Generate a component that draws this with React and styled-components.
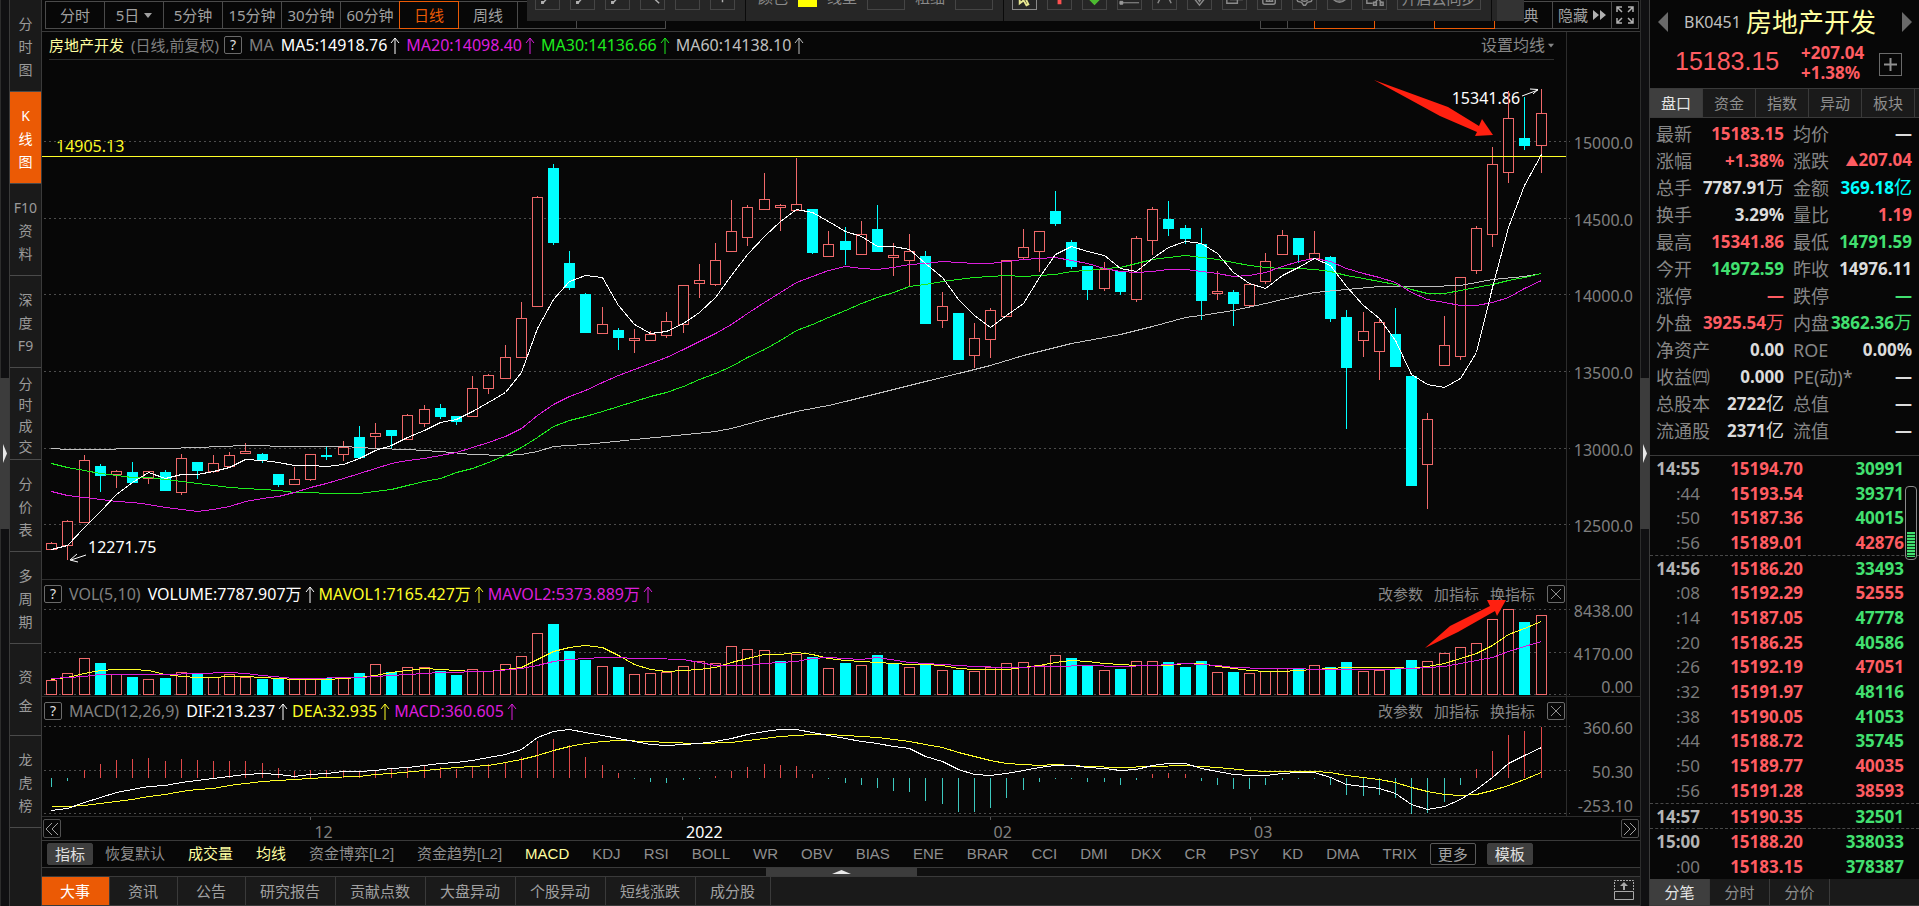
import React from "react";
import styled, { createGlobalStyle } from "styled-components";

const C = {
  bg: "#070707",
  panel: "#1a1a1a",
  line: "#3a3a3a",
  dim: "#808080",
  mid: "#a0a0a0",
  red: "#ff5c62",
  green: "#42e070",
  cyan: "#00ffff",
  candle: "#f0696a",
  pale: "#ffffa0",
  yellow: "#ffff28",
  magenta: "#dc1edc",
  lime: "#1eec1e",
  white: "#ffffff",
  silver: "#c0c0c0",
  orange: "#eb5a05",
};

const GlobalStyle = createGlobalStyle`
  * { box-sizing: border-box; }
  body { margin: 0; background: ${C.bg}; color: ${C.mid};
    font: 15px/20px "Noto Sans", "Noto Sans CJK SC", sans-serif; }
  button, select { font: inherit; color: inherit; margin: 0; padding: 0;
    border: 0; background: none; white-space: nowrap; }
`;

/* ---------- frame ---------- */
const Frame = styled.div`
  display: flex;
  height: 100vh;
  min-height: 800px;
  min-width: 1400px;
  overflow: hidden;
`;
const Gutter = styled.div`
  flex: none;
  width: 9px;
  display: flex;
  align-items: center;
  background: #101012;
  box-shadow: inset 1px 0 0 #2c2c2c;
`;
const Grip = styled.button`
  display: flex;
  align-items: center;
  justify-content: center;
  width: ${(p) => (p.$flat ? "151px" : "9px")};
  height: ${(p) => (p.$flat ? "8px" : "151px")};
  background: #3c3c3c;
`;
const Main = styled.main`
  flex: 1;
  min-width: 0;
  display: flex;
  flex-direction: column;
`;

/* ---------- left navigation ---------- */
const SideNav = styled.nav`
  flex: none;
  width: 33px;
  background: ${C.panel};
  border-left: 1px solid ${C.line};
  border-right: 1px solid ${C.line};
`;
const SideButton = styled.button`
  display: flex;
  flex-direction: column;
  align-items: center;
  justify-content: center;
  width: 100%;
  height: 92px;
  padding-top: 2px;
  border-bottom: 1px solid #4a4a4a;
  font-size: 14px;
  line-height: ${(p) => p.$pitch || 23}px;
  color: ${(p) => (p.$active ? "#fff" : "#9a9a9a")};
  background: ${(p) => (p.$active ? C.orange : "transparent")};
`;

/* ---------- period toolbar ---------- */
const Toolbar = styled.div`
  position: relative;
  display: flex;
  align-items: flex-start;
  height: 32px;
  padding: 1px 2px 0 3px;
  border-bottom: 1px solid ${C.line};
`;
const Period = styled.button`
  display: flex;
  align-items: center;
  justify-content: center;
  gap: 5px;
  flex: none;
  width: ${(p) => p.$w || 60}px;
  height: 28px;
  margin-right: -1px;
  padding-left: ${(p) => (p.$shift ? 15 : 0)}px;
  border: 1px solid ${(p) => (p.$active ? C.orange : "#4a4a4a")};
  z-index: ${(p) => (p.$active ? 1 : 0)};
  color: ${(p) => (p.$active ? C.orange : C.mid)};
`;
const Spacer = styled.div`
  flex: 1;
`;

/* ---------- drawing tools floating over the toolbar ---------- */
const DrawBar = styled.div`
  position: absolute;
  z-index: 3;
  top: -15px;
  left: 485px;
  right: 116px;
  height: 36px;
  display: flex;
  overflow: hidden;
  background: #262626;
`;
const DrawGroup = styled.div`
  display: flex;
  align-items: flex-start;
  gap: 10px;
  padding: 0 10px 0 ${(p) => (p.$wide ? 12 : 8)}px;
  border-right: 1px solid #0a0a0a;
`;
const DrawButton = styled.button`
  flex: none;
  width: ${(p) => p.$w || 25}px;
  height: 25px;
  border: 1px solid ${(p) => (p.$active ? "#8a8a8a" : "#454545")};
  line-height: 24px;
  color: #8a8a8a;
  svg { display: block; }
`;
const DrawField = styled.label`
  display: flex;
  align-items: flex-start;
  gap: 10px;
  line-height: 24px;
  color: #8a8a8a;
  white-space: nowrap;
`;
const DrawSelect = styled.select`
  appearance: none;
  width: 38px;
  height: 25px;
  border: 1px solid #454545;
`;
const Swatch = styled.input`
  appearance: none;
  width: 19px;
  height: 19px;
  margin: 3px 0;
  padding: 0;
  border: 0;
  background: #ffff00;
  &::-webkit-color-swatch-wrapper { padding: 0; }
  &::-webkit-color-swatch { border: 0; }
`;
const DrawEnd = styled.div`
  width: 27px;
  margin-left: auto;
  background: #333;
`;

/* ---------- chart panes ---------- */
const Pane = styled.section`
  display: grid;
  grid-template-columns: 1fr 74px;
  grid-template-rows: ${(p) => (p.$h ? `${p.$head}px ${p.$h}px` : `${p.$head}px minmax(200px, 1fr)`)};
  flex: ${(p) => (p.$h ? "none" : 1)};
  min-height: 0;
  border-bottom: 1px solid #2c2c2c;
`;
const PaneHead = styled.header`
  display: flex;
  align-items: center;
  margin: ${(p) => (p.$ruled ? "0 12px 0 7px" : "0 1px 0 2px")};
  padding-bottom: 1px;
  border-bottom: ${(p) => (p.$ruled ? "1px solid #303030" : "0")};
  font-size: 16px;
  color: ${C.dim};
  white-space: nowrap;
`;
const AxisTop = styled.div`
  border-left: 1px solid #2c2c2c;
`;
const Axis = styled.div`
  position: relative;
  border-left: 1px solid #2c2c2c;
  font-size: 16px;
  color: ${C.dim};
`;
const AxisLabel = styled.span`
  position: absolute;
  right: 7px;
  top: ${(p) => p.$top}%;
  transform: translateY(-50%);
`;
const Plot = styled.div`
  position: relative;
  min-width: 0;
`;
const PlotSvg = styled.svg`
  position: absolute;
  z-index: 1;
  inset: 0;
  width: 100%;
  height: 100%;
  overflow: visible;
  pointer-events: none;
  polyline, line, rect { shape-rendering: crispEdges; vector-effect: non-scaling-stroke; }
`;
const PlotNote = styled.span`
  position: absolute;
  left: ${(p) => p.$left}%;
  top: ${(p) => p.$top}%;
  transform: translateY(-50%);
  font-size: 16px;
  color: ${(p) => p.$color || C.white};
`;
const Title = styled.span`
  margin-right: 7px;
  font-size: 15px;
  color: ${C.pale};
`;
const Adjust = styled.span`
  margin-right: 5px;
  font-size: 15px;
`;
const Help = styled.button`
  width: 18px;
  height: 18px;
  margin-right: 7px;
  border: 1px solid #6a6a6a;
  border-radius: 2px;
  font-size: 14px;
  line-height: 16px;
  color: #e0e0e0;
`;
const Name = styled.span`
  margin-right: 7px;
`;
const Reading = styled.span`
  display: flex;
  align-items: center;
  gap: 3px;
  margin-right: ${(p) => p.$gap || 6}px;
  color: ${(p) => p.$color};
`;
const HeadAction = styled.button`
  display: flex;
  align-items: center;
  gap: 3px;
  margin-right: ${(p) => p.$gap || 0}px;
  font-size: ${(p) => p.$size || 15}px;
  color: #868686;
`;
const CloseBox = styled.button`
  display: flex;
  width: 18px;
  height: 18px;
  align-items: center;
  justify-content: center;
  border: 1px solid #6a6a6a;
  border-radius: 2px;
`;

/* ---------- date row ---------- */
const DateRow = styled.div`
  position: relative;
  flex: none;
  display: flex;
  justify-content: space-between;
  height: 24px;
  padding: 2px 1px 0 1px;
  border-bottom: 1px solid ${C.line};
`;
const PageButton = styled.button`
  display: flex;
  align-items: center;
  justify-content: center;
  width: 18px;
  height: 19px;
  border: 1px solid #505050;
  border-radius: 2px;
`;
const DateMark = styled.span`
  position: absolute;
  bottom: -2px;
  left: ${(p) => p.$left}%;
  padding-left: 4px;
  font-size: 16px;
  color: ${(p) => (p.$strong ? C.white : C.dim)};
  &::before { content: ""; position: absolute; left: 0; bottom: 22px; height: 3px; border-left: 1px solid #555; }
`;

/* ---------- indicator row ---------- */
const IndicatorRow = styled.div`
  flex: none;
  display: flex;
  align-items: center;
  height: 27px;
  padding-left: 5px;
  border-bottom: 1px solid ${C.line};
`;
const Indicator = styled.button`
  margin-left: ${(p) => p.$lead || 23}px;
  font-family: "Liberation Sans", "Noto Sans CJK SC", sans-serif;
  color: ${(p) => (p.$on ? C.pale : "#8e8e8e")};
`;
const Pill = styled.button`
  flex: none;
  width: 46px;
  height: 22px;
  line-height: 20px;
  margin-left: ${(p) => p.$lead || 0}px;
  border: 1px solid ${(p) => (p.$outlined ? "#5a5a5a" : "#3e3e3e")};
  border-radius: 2px;
  background: ${(p) => (p.$outlined ? "transparent" : "#3e3e3e")};
  color: ${(p) => (p.$outlined ? C.mid : "#e0e0e0")};
`;
const FlatGutter = styled.div`
  flex: none;
  display: flex;
  justify-content: center;
  height: 8px;
  background: #101010;
`;
const BottomTabs = styled.nav`
  flex: none;
  display: flex;
  height: 30px;
  background: ${C.panel};
  border-top: 1px solid ${C.line};
  border-bottom: 1px solid ${C.line};
`;
const BottomTab = styled.button`
  min-width: 68px;
  padding: 0 15px 0 14px;
  border-right: 1px solid ${C.line};
  color: ${(p) => (p.$active ? "#fff" : C.mid)};
  background: ${(p) => (p.$active ? C.orange : "transparent")};
`;
const ExpandButton = styled.button`
  margin: 2px 6px 0 auto;
`;

/* ---------- quote panel ---------- */
const Quote = styled.aside`
  flex: none;
  width: 270px;
  display: flex;
  flex-direction: column;
  border-left: 1px solid ${C.line};
`;
const QuoteTop = styled.header`
  flex: none;
  height: 88px;
  padding: 3px 7px 0 8px;
`;
const QuoteName = styled.div`
  display: flex;
  align-items: center;
  height: 38px;
`;
const Code = styled.span`
  margin-left: 16px;
  font-size: 16px;
  color: ${C.silver};
`;
const StockName = styled.span`
  flex: 1;
  margin-left: 5px;
  font-size: 26px;
  line-height: 38px;
  color: ${C.pale};
`;
const QuotePrice = styled.div`
  display: flex;
  align-items: center;
  height: 44px;
  padding: 0 10px 0 17px;
  color: ${C.red};
`;
const Last = styled.strong`
  flex: none;
  width: 126px;
  padding-bottom: 5px;
  font: 25px/30px "Liberation Sans", sans-serif;
`;
const Change = styled.strong`
  flex: 1;
  font-size: 17px;
  line-height: 20px;
`;
const AddButton = styled.button`
  display: flex;
  margin-top: 2px;
  width: 23px;
  height: 23px;
  border: 1px solid #6a6a6a;
`;
const QuoteTabs = styled.nav`
  flex: none;
  display: flex;
  height: ${(p) => p.$h || 30}px;
  background: ${C.panel};
  border-top: ${(p) => (p.$h ? 0 : 1)}px solid ${C.line};
  border-bottom: 1px solid ${C.line};
`;
const QuoteTab = styled.button`
  flex: none;
  width: ${(p) => p.$w || 53}px;
  border-right: 1px solid ${C.line};
  color: ${(p) => (p.$active ? "#e6e6e6" : "#8e8e8e")};
  background: ${(p) => (p.$active ? "#3e3e3e" : "transparent")};
`;
const InfoWrap = styled.div`
  flex: none;
  padding: 2px 7px 11px 6px;
  border-bottom: 1px solid ${C.line};
`;
const InfoTable = styled.table`
  width: 100%;
  table-layout: fixed;
  border-collapse: collapse;
  th, td { height: 27px; padding: 0; line-height: 26px; white-space: nowrap; }
`;
const InfoLabel = styled.th`
  text-align: left;
  font-weight: 400;
  font-size: 18px;
  color: #868686;
`;
const InfoValue = styled.td`
  text-align: right;
  font-size: 17px;
  font-weight: 700;
  color: ${(p) => p.$color};
  span { float: right; }
  i { font-style: normal; font-weight: 400; font-size: 18px; }
`;
const TickWrap = styled.div`
  position: relative;
  flex: 1;
  min-height: 0;
`;
const TickTable = styled.table`
  width: 100%;
  height: 100%;
  table-layout: fixed;
  border-collapse: collapse;
  td { padding: 1px 0 0; line-height: 20px; font-size: 17px; font-weight: 700; }
`;
const TickRow = styled.tr`
  border-bottom: ${(p) => (p.$rule ? `1px dashed #484848` : "0")};
`;
const TickTime = styled.td`
  width: 50px;
  text-align: right;
  && { font-weight: ${(p) => (p.$major ? 700 : 400)}; }
  color: ${(p) => (p.$major ? "#b4b4b4" : "#7a7a7a")};
`;
const TickPrice = styled.td`
  width: 103px;
  text-align: right;
  color: ${C.red};
`;
const TickVolume = styled.td`
  text-align: right;
  && { padding-right: 15px; }
  color: ${(p) => (p.$up ? C.red : C.green)};
`;
const Meter = styled.div`
  position: absolute;
  right: 2px;
  top: 30px;
  width: 12px;
  height: 74px;
  padding: 45px 1px 2px;
  border: 1px solid #8a8a8a;
  border-radius: 4px;
  &::after { content: ""; display: block; height: 25px;
    background: repeating-linear-gradient(${C.green} 0 2px, #0c3a18 2px 3px); }
`;

/* ---------- series ---------- */
// Each candle: [rising, high, body top, body bottom, low] on the price plot's own scale.
const CANDLES = [
  [1,542,543,549,549],[1,520,521,545,560],[1,455,460,522,522],[0,464,466,475,492],[1,470,471,474,488],[0,462,472,482,482],
  [1,471,471,478,484],[0,470,472,490,491],[1,454,458,492,495],[0,462,462,470,479],[1,455,463,471,473],[1,452,455,466,466],
  [1,443,451,453,453],[0,453,454,459,463],[0,474,474,484,487],[1,467,479,484,484],[1,454,454,479,481],[0,446,455,456,460],
  [1,441,447,454,461],[0,426,437,457,457],[1,423,433,436,448],[0,430,430,435,448],[1,414,415,439,440],[1,405,409,423,427],
  [0,404,408,416,419],[0,416,416,421,425],[1,376,388,416,416],[1,374,375,388,394],[1,345,357,378,379],[1,302,318,357,357],
  [1,196,197,306,306],[0,164,168,242,245],[0,251,263,287,290],[0,293,294,332,332],[1,307,324,333,333],[0,328,330,337,350],
  [1,329,338,340,353],[1,331,334,340,340],[1,312,321,335,338],[1,285,285,324,333],[1,264,280,283,298],[1,243,260,284,286],
  [1,200,231,251,251],[1,205,207,237,246],[1,173,199,209,209],[1,204,205,207,231],[1,158,204,210,210],[0,209,209,252,254],
  [1,231,244,256,256],[0,227,241,249,265],[1,221,234,254,254],[0,205,229,251,252],[1,243,255,257,276],[1,234,251,260,287],
  [0,251,256,323,324],[1,292,306,320,328],[0,313,313,359,359],[1,323,338,355,368],[1,308,310,339,358],[1,260,260,316,316],
  [1,229,247,257,260],[1,231,231,251,272],[0,191,211,223,226],[0,240,242,266,269],[0,266,266,289,300],[1,262,269,288,291],
  [0,271,271,291,295],[1,236,238,299,302],[1,207,209,240,255],[0,201,219,228,236],[0,225,228,238,244],[0,228,244,300,320],
  [1,271,291,293,300],[0,290,292,303,326],[1,284,284,305,305],[1,253,261,281,284],[1,230,235,254,254],[0,238,238,254,263],
  [1,231,253,258,258],[0,256,257,318,322],[0,310,317,367,429],[1,312,331,340,357],[1,318,322,351,380],[0,308,334,366,366],
  [0,376,376,485,485],[1,413,419,464,509],[1,316,345,365,365],[1,277,277,356,360],[1,226,228,270,274],[1,147,164,234,247],
  [1,91,118,172,183],[0,97,138,145,150],[1,89,113,145,173],
];
const MA5 = [549,545,527,511,494,482,472,478,474,474,471,467,459,460,462,465,465,466,464,458,450,445,437,430,422,419,411,402,392,372,
  328,299,281,275,277,305,324,333,331,323,312,297,275,254,236,221,209,212,221,231,236,246,246,249,263,277,299,315,327,315,303,277,
  254,246,251,255,268,271,258,247,241,243,253,272,283,288,275,267,258,265,286,305,318,340,374,384,387,378,352,287,227,185,154];
const MA20 = [491,495,497,499,501,502,504,507,509,511,509,506,501,498,496,492,487,483,478,473,468,463,460,458,455,452,447,442,436,428,
  415,404,396,390,382,375,369,363,357,349,341,333,324,313,302,292,282,276,270,266,268,269,267,264,263,261,262,263,263,261,259,258,
  257,260,263,268,271,272,271,269,269,271,273,276,275,272,266,261,258,261,268,273,277,282,292,299,302,305,305,302,297,288,280];
const MA30 = [463,467,470,473,475,477,477,479,481,483,485,487,488,489,490,492,492,493,493,493,491,489,485,481,478,472,468,462,455,447,
  437,426,420,416,411,406,401,396,392,386,379,373,366,357,349,340,330,324,317,310,303,297,292,286,284,281,279,277,276,275,276,275,
  274,271,270,268,267,263,259,257,255,257,259,262,265,267,268,268,269,271,275,278,281,284,289,293,293,290,287,284,280,277,273];
const MA60 = [[0,448],[1,449],[7,448],[9,447],[12,445],[15,446],[18,446],[20,448],[22,449],[24,451],[26,454],[28,455],[29,454],[30,451],
  [31,446],[33,444],[36,439],[38,436],[41,431],[42,428],[44,419],[46,411],[48,405],[49,401],[51,393],[53,385],[54,381],[56,373],
  [57,369],[58,365],[60,355],[62,347],[63,343],[65,337],[66,334],[68,326],[70,317],[71,315],[73,310],[75,303],[76,299],[78,292],
  [80,289],[82,286],[85,286],[87,285],[89,279],[91,276],[92,273]];
const VOLUME = [680,673,658,663,674,677,679,678,672,674,677,674,677,679,679,679,679,678,678,673,664,672,667,667,671,675,669,671,664,656,
  633,624,651,660,666,667,674,673,672,666,661,663,646,649,650,661,654,657,668,663,665,655,663,667,665,670,670,671,667,663,662,665,
  655,658,665,670,669,661,661,662,667,661,672,672,673,671,668,669,665,667,662,671,670,669,660,661,653,647,643,619,609,622,615];
// Days whose volume bar is coloured by the previous close rather than the open.
const VOLUME_SWAP = new Set([45, 52, 62]);
const MAVOL1 = [679,677,673,670,669,669,670,674,676,677,677,676,676,677,678,679,679,679,678,677,675,672,670,668,669,670,671,671,669,667,
  659,651,647,645,647,655,664,669,671,670,669,667,662,658,654,654,652,654,658,660,661,662,663,664,664,665,668,669,669,669,667,665,
  662,660,661,663,664,665,665,665,663,663,666,668,670,671,671,670,669,668,667,667,667,667,668,666,663,658,653,645,634,628,621];
const MAVOL2 = [[0,678],[2,676],[3,674],[7,674],[9,673],[11,672],[12,673],[13,675],[15,678],[19,677],[21,675],[22,674],[24,672],[27,671],
  [29,668],[30,665],[31,661],[32,659],[34,657],[37,658],[39,659],[40,662],[41,665],[43,665],[44,663],[46,661],[47,658],[48,657],
  [50,659],[51,657],[53,662],[55,664],[57,666],[59,667],[62,666],[64,665],[66,666],[68,665],[70,663],[72,665],[73,667],[75,668],
  [80,669],[82,669],[84,668],[86,666],[87,663],[88,660],[89,657],[90,651],[91,646],[92,641]];
const MACD = [787,781,770,764,760,759,758,761,759,760,761,761,761,763,768,771,770,770,770,771,770,769,767,766,767,769,767,764,762,757,
  741,739,745,757,765,773,779,782,783,780,779,776,771,767,764,765,766,774,779,783,785,788,791,792,801,804,812,812,808,798,790,782,
  779,779,782,782,785,780,774,773,774,781,785,789,789,785,780,779,779,785,795,796,795,798,814,813,802,785,769,751,735,731,727];
const DIF = [810,808,802,797,792,789,786,785,782,780,778,776,774,773,774,776,774,773,771,771,770,768,767,765,763,762,760,757,754,749,
  737,731,729,732,735,738,741,744,745,744,743,741,738,734,731,729,729,732,735,738,741,743,746,748,756,761,769,774,775,773,770,767,
  765,765,767,768,770,769,765,763,763,768,771,774,775,775,773,772,772,777,784,786,788,793,804,809,806,799,789,777,763,755,747];
const DEA = [[0,806],[1,806],[2,805],[3,803],[4,801],[5,799],[6,796],[7,794],[8,791],[9,789],[10,788],[11,785],[12,783],[13,781],[15,779],
  [17,777],[19,776],[20,774],[21,773],[23,770],[25,767],[27,765],[28,762],[29,759],[30,755],[31,750],[32,746],[33,743],[34,741],
  [35,740],[37,741],[38,742],[40,743],[42,742],[43,740],[44,738],[45,736],[47,734],[48,734],[49,735],[51,737],[53,741],[54,744],
  [55,747],[56,752],[57,756],[58,760],[59,763],[60,764],[61,765],[62,764],[64,766],[66,767],[68,766],[70,765],[72,767],[74,770],
  [75,771],[78,771],[79,772],[80,775],[82,779],[83,782],[84,787],[85,791],[86,794],[87,795],[88,794],[89,790],[90,785],[91,779],[92,772]];

const xAt = (i) => Math.floor(51.7 + i * 16.19);
const toPoints = (s) =>
  s.map((v, i) => (Array.isArray(v) ? `${xAt(v[0]) + 0.5},${v[1] + 0.5}` : `${xAt(i) + 0.5},${v + 0.5}`)).join(" ");

const Series = ({ data, color }) => <polyline points={toPoints(data)} fill="none" stroke={color} />;

const Grid = ({ rows }) =>
  rows.map((y) => (
    <line key={y} x1="44" x2="1570" y1={y + 0.5} y2={y + 0.5} stroke="#4c4c4c" strokeDasharray="2 3" />
  ));

const Bar = ({ i, up, top, bottom }) =>
  up ? (
    <rect x={xAt(i) - 4.5} y={top + 0.5} width="10" height={Math.max(bottom - top - 1, 1)} fill={C.bg} stroke={C.candle} />
  ) : (
    <rect x={xAt(i) - 5} y={top} width="11" height={Math.max(bottom - top, 1)} fill={C.cyan} />
  );

const PricePlot = () => (
  <PlotSvg viewBox="42 60 1524 519" preserveAspectRatio="none">
    <Grid rows={[141, 218, 294, 371, 448, 524]} />
    {CANDLES.map(([up, hi, top, bottom, lo], i) => (
      <g key={i}>
        <line x1={xAt(i) + 0.5} x2={xAt(i) + 0.5} y1={hi} y2={lo} stroke={up ? C.candle : C.cyan} />
        <Bar i={i} up={up} top={top} bottom={bottom + 1} />
      </g>
    ))}
    <Series data={MA60} color={C.silver} />
    <Series data={MA30} color={C.lime} />
    <Series data={MA20} color={C.magenta} />
    <Series data={MA5} color={C.white} />
    <line x1="42" x2="1566" y1="156.5" y2="156.5" stroke={C.yellow} />
    <path d="M86 555L71 560M77 554L70 560L78 562" fill="none" stroke="#fff" />
    <path d="M1522 96L1538 90M1530 89L1538 89.500L1533 94" fill="none" stroke="#fff" />
    <path d="M1374 80L1448 107L1479 126L1482 119L1493 135L1475 136L1477 132L1440 116Z" fill="#ff2010" />
  </PlotSvg>
);

const VolumePlot = () => (
  <PlotSvg viewBox="42 609 1524 87" preserveAspectRatio="none">
    <Grid rows={[609, 652, 694]} />
    {VOLUME.map((top, i) => (
      <Bar key={i} i={i} up={VOLUME_SWAP.has(i) ? !CANDLES[i][0] : CANDLES[i][0]} top={top} bottom={695} />
    ))}
    <Series data={MAVOL1} color={C.yellow} />
    <Series data={MAVOL2} color={C.magenta} />
    <path d="M1425 648L1450 626L1490 606L1487 600L1506 600L1497 616L1495 611L1458 632Z" fill="#ff2010" />
  </PlotSvg>
);

const MacdPlot = () => (
  <PlotSvg viewBox="42 726 1524 90" preserveAspectRatio="none">
    <Grid rows={[726, 770, 813]} />
    {MACD.map((y, i) => (
      <line key={i} x1={xAt(i) + 0.5} x2={xAt(i) + 0.5} y1="778" y2={y} stroke={y < 778 ? "#e04848" : "#3cc8be"} />
    ))}
    <Series data={DEA} color={C.yellow} />
    <Series data={DIF} color={C.white} />
  </PlotSvg>
);

/* ---------- small drawings ---------- */
const UpArrow = () => (
  <svg width="10" height="17" viewBox="0 0 10 17" fill="none" stroke="currentColor">
    <path d="M5 17V1M1 6L5 1L9 6" />
  </svg>
);
const Caret = ({ size = 8 }) => (
  <svg width={size} height="5" viewBox="0 0 8 5" fill="currentColor">
    <path d="M0 0H8L4 5Z" />
  </svg>
);
const Chevrons = ({ flip }) => (
  <svg width="14" height="14" viewBox="0 0 14 14" fill="none" stroke="#a0a0a0">
    <path d={flip ? "M1 1L7 7L1 13M7 1L13 7L7 13" : "M7 1L1 7L7 13M13 1L7 7L13 13"} />
  </svg>
);
const GripMark = () => (
  <svg width="4" height="19" viewBox="0 0 4 19">
    <path d="M0 0L4 9.500L0 19Z" fill="#e8e8e8" />
  </svg>
);
const SideTriangle = ({ flip }) => (
  <svg width="10" height="20" viewBox="0 0 10 20" fill="#6a6a6a">
    <path d={flip ? "M0 0L10 10L0 20Z" : "M10 0L0 10L10 20Z"} />
  </svg>
);

const DOTTED_LINE = "M7 18L15 9M6 16.500h1.500v1.500h-1.500z";
const LINE_TOOLS = [DOTTED_LINE, DOTTED_LINE, DOTTED_LINE, "M6 6L19 18", "M4 8H20", "M12 4V17M8 8H16"];
const SHAPE_TOOLS = [
  <path key="a" d="M7 4V18L11 15L14 20L16 19L13 13H17Z" fill="#101010" stroke="#e6e690" strokeWidth="2" />,
  <path key="b" d="M10 19V10H6L12 3L18 10H14V19Z" fill="#ff5050" />,
  <path key="c" d="M10 4V13H5L12 20L19 13H14V4Z" fill="#4cbb30" />,
  <path key="d" d="M2 16h3v3h-3zM4 17.500H22" fill="#9a9a9a" stroke="#9a9a9a" strokeWidth="1" />,
  <path key="e" d="M5 18L10 8M19 18L14 8" fill="none" stroke="#8a8a8a" strokeWidth="1.500" />,
  <path key="f" d="M4 10L12 20L20 10M8 10L12 16L16 10" fill="none" stroke="#8a8a8a" strokeWidth="1.500" />,
  <path key="g" d="M4 6V18H15V14M8 4V14H20V6" fill="none" stroke="#8a8a8a" strokeWidth="1.500" />,
  <path key="h" d="M5 8V17Q5 19 7 19H16Q18 19 18 17V8M9 10V16M12 10V16M15 10V16M8 16H16" fill="none" stroke="#8a8a8a" strokeWidth="1.500" />,
  <path key="i" d="M3 12L5 16L9 17L11 20H13L15 17L19 16L21 12M8 12A4 4 0 0 0 16 12" fill="none" stroke="#8a8a8a" strokeWidth="1.500" />,
  <path key="j" d="M3 11Q12 23 21 11M9 11A3 3 0 0 0 15 11" fill="#5a5a5a" stroke="#8a8a8a" strokeWidth="1.500" />,
  <path key="k" d="M4 5V18H10M12 18L18 11M20 18L14 11M11 17h3v3h-3zM18 17h3v3h-3z" fill="none" stroke="#8a8a8a" strokeWidth="1.500" />,
];

const DrawingBar = () => (
  <DrawBar>
    <DrawGroup>
      {LINE_TOOLS.map((d, i) => (
        <DrawButton key={i}>
          <svg width="23" height="23" viewBox="0 0 24 24" fill="none" stroke="#b0b0b0" strokeWidth="1.500"><path d={d} /></svg>
        </DrawButton>
      ))}
    </DrawGroup>
    <DrawGroup $wide>
      <DrawField>颜色<Swatch type="color" defaultValue="#ffff00" /></DrawField>
      <DrawField>线型<DrawSelect /></DrawField>
      <DrawField>粗细<DrawSelect /></DrawField>
    </DrawGroup>
    <DrawGroup>
      {SHAPE_TOOLS.map((shape, i) => (
        <DrawButton key={i} $active={i === 0}>
          <svg width="23" height="23" viewBox="0 0 24 24">{shape}</svg>
        </DrawButton>
      ))}
      <DrawButton $w={84}>开启云同步</DrawButton>
    </DrawGroup>
    <DrawEnd />
  </DrawBar>
);

const SIDE = [
  ["分", "时", "图"], ["K", "线", "图"], ["F10", "资", "料"], ["深", "度", "F9"],
  ["分", "时", "成", "交"], ["分", "价", "表"], ["多", "周", "期"], ["资", "金"], ["龙", "虎", "榜"],
];
const PERIODS = ["分时", "5日", "5分钟", "15分钟", "30分钟", "60分钟", "日线", "周线"];
const INDICATORS = ["资金博弈[L2]", "资金趋势[L2]", "MACD", "KDJ", "RSI", "BOLL", "WR", "OBV", "BIAS", "ENE", "BRAR", "CCI", "DMI",
  "DKX", "CR", "PSY", "KD", "DMA", "TRIX"];
const BOTTOM = ["大事", "资讯", "公告", "研究报告", "贡献点数", "大盘异动", "个股异动", "短线涨跌", "成分股"];

const W = "#dcdcdc";
const INFO = [
  ["最新", "15183.15", C.red, "均价", "—", W],
  ["涨幅", "+1.38%", C.red, "涨跌", "▲207.04", C.red],
  ["总手", "7787.91万", W, "金额", "369.18亿", C.cyan],
  ["换手", "3.29%", W, "量比", "1.19", C.red],
  ["最高", "15341.86", C.red, "最低", "14791.59", C.green],
  ["今开", "14972.59", C.green, "昨收", "14976.11", W],
  ["涨停", "—", C.red, "跌停", "—", C.green],
  ["外盘", "3925.54万", C.red, "内盘", "3862.36万", C.green],
  ["净资产", "0.00", W, "ROE", "0.00%", W],
  ["收益㈣", "0.000", W, "PE(动)*", "—", W],
  ["总股本", "2722亿", W, "总值", "—", W],
  ["流通股", "2371亿", W, "流值", "—", W],
];
const TICKS = [
  ["14:55", "15194.70", "30991", 0], [":44", "15193.54", "39371", 0], [":50", "15187.36", "40015", 0], [":56", "15189.01", "42876", 1],
  ["14:56", "15186.20", "33493", 0], [":08", "15192.29", "52555", 1], [":14", "15187.05", "47778", 0], [":20", "15186.25", "40586", 0],
  [":26", "15192.19", "47051", 1], [":32", "15191.97", "48116", 0], [":38", "15190.05", "41053", 0], [":44", "15188.72", "35745", 0],
  [":50", "15189.77", "40035", 1], [":56", "15191.28", "38593", 1], ["14:57", "15190.35", "32501", 0], ["15:00", "15188.20", "338033", 0],
  [":00", "15183.15", "378387", 0],
];

const RiseMark = styled.small`
  font-size: 13px;
`;

const Figure = ({ text }) => {
  const [, rise, number, unit] = text.match(/^(▲?)(.*?)([万亿]?)$/);
  return (
    <span>
      {rise && <RiseMark>{rise}</RiseMark>}
      {number}
      {unit && <i>{unit}</i>}
    </span>
  );
};

const PaneActions = () => (
  <>
    <Spacer />
    <HeadAction $gap={11}>改参数</HeadAction>
    <HeadAction $gap={11}>加指标</HeadAction>
    <HeadAction $gap={12}>换指标</HeadAction>
    <CloseBox>
      <svg width="10" height="10" viewBox="0 0 10 10" stroke="#909090"><path d="M0 0L10 10M10 0L0 10" /></svg>
    </CloseBox>
  </>
);

const Labels = ({ from, height, items }) => (
  <Axis>
    {items.map(([text, y]) => (
      <AxisLabel key={text} $top={((y - from) / height) * 100}>{text}</AxisLabel>
    ))}
  </Axis>
);

export default function App() {
  return (
    <Frame>
      <GlobalStyle />
      <Gutter><Grip><GripMark /></Grip></Gutter>
      <SideNav>
        {SIDE.map((chars, i) => (
          <SideButton key={i} $active={i === 1} $pitch={chars.length === 4 ? 21 : chars.length === 2 ? 29 : 23}>
            {chars.map((c, k) => <span key={k}>{c}</span>)}
          </SideButton>
        ))}
      </SideNav>
      <Main>
        <Toolbar>
          {PERIODS.map((t) => (
            <Period key={t} $active={t === "日线"}>
              {t}
              {t === "5日" && <Caret />}
            </Period>
          ))}
          <Period as="div" />
          <Period as="div" $w={90} />
          <Spacer />
          <Period as="div" $w={28} />
          <Period as="div" $w={28} />
          <Period as="div" $w={61} $active />
          <Period as="div" $w={61} />
          <Period as="div" $w={61} $active />
          <Period $w={59} $shift>典</Period>
          <Period $w={60}>
            隐藏
            <svg width="13" height="10" viewBox="0 0 13 10" fill="#b0b0b0"><path d="M0 0L6 5L0 10ZM7 0L13 5L7 10Z" /></svg>
          </Period>
          <Period $w={28}>
            <svg width="18" height="18" viewBox="0 0 18 18" fill="none" stroke="#b0b0b0" strokeWidth="1.500">
              <path d="M1 6V1H6M1 1L6 6M12 1H17V6M17 1L12 6M1 12V17H6M1 17L6 12M17 12V17H12M17 17L12 12" />
            </svg>
          </Period>
          <DrawingBar />
        </Toolbar>

        <Pane $head={28}>
          <PaneHead $ruled>
            <Title>房地产开发</Title>
            <Adjust>(日线,前复权)</Adjust>
            <Help>?</Help>
            <Name>MA</Name>
            <Reading $color={C.white}>MA5:14918.76<UpArrow /></Reading>
            <Reading $color={C.magenta}>MA20:14098.40<UpArrow /></Reading>
            <Reading $color={C.lime}>MA30:14136.66<UpArrow /></Reading>
            <Reading $color={C.silver}>MA60:14138.10<UpArrow /></Reading>
            <Spacer />
            <HeadAction $size={16}>设置均线<Caret size={6} /></HeadAction>
          </PaneHead>
          <AxisTop />
          <Plot>
            <PlotNote $left={0.918} $top={16.6} $color={C.yellow}>14905.13</PlotNote>
            <PlotNote $left={3.02} $top={93.8}>12271.75</PlotNote>
            <PlotNote $left={92.5} $top={7.4}>15341.86</PlotNote>
            <PricePlot />
          </Plot>
          <Labels from={60} height={519} items={[["15000.0", 143], ["14500.0", 220], ["14000.0", 296], ["13500.0", 373], ["13000.0", 450], ["12500.0", 526]]} />
        </Pane>

        <Pane $head={29} $h={87}>
          <PaneHead>
            <Help>?</Help>
            <Name>VOL(5,10)</Name>
            <Reading $color={C.white} $gap={4}>VOLUME:7787.907万<UpArrow /></Reading>
            <Reading $color={C.yellow} $gap={4}>MAVOL1:7165.427万<UpArrow /></Reading>
            <Reading $color={C.magenta}>MAVOL2:5373.889万<UpArrow /></Reading>
            <PaneActions />
          </PaneHead>
          <AxisTop />
          <Plot><VolumePlot /></Plot>
          <Labels from={609} height={87} items={[["8438.00", 611], ["4170.00", 654], ["0.00", 687]]} />
        </Pane>

        <Pane $head={29} $h={90}>
          <PaneHead>
            <Help>?</Help>
            <Name>MACD(12,26,9)</Name>
            <Reading $color={C.white} $gap={4}>DIF:213.237<UpArrow /></Reading>
            <Reading $color={C.yellow} $gap={4}>DEA:32.935<UpArrow /></Reading>
            <Reading $color={C.magenta}>MACD:360.605<UpArrow /></Reading>
            <PaneActions />
          </PaneHead>
          <AxisTop />
          <Plot><MacdPlot /></Plot>
          <Labels from={726} height={90} items={[["360.60", 728], ["50.30", 772], ["-253.10", 806]]} />
        </Pane>

        <DateRow>
          <PageButton><Chevrons /></PageButton>
          <DateMark $left={16.8}>12</DateMark>
          <DateMark $left={40.05} $strong>2022</DateMark>
          <DateMark $left={59.3}>02</DateMark>
          <DateMark $left={75.6}>03</DateMark>
          <PageButton><Chevrons flip /></PageButton>
        </DateRow>

        <IndicatorRow>
          <Pill>指标</Pill>
          <Indicator $lead={12}>恢复默认</Indicator>
          <Indicator $on>成交量</Indicator>
          <Indicator $on>均线</Indicator>
          {INDICATORS.map((t) => <Indicator key={t} $on={t === "MACD"}>{t}</Indicator>)}
          <Pill $outlined $lead={13}>更多</Pill>
          <Pill $lead={11}>模板</Pill>
        </IndicatorRow>
        <FlatGutter>
          <Grip $flat>
            <svg width="19" height="4" viewBox="0 0 19 4"><path d="M0 4L9.500 0L19 4Z" fill="#e8e8e8" /></svg>
          </Grip>
        </FlatGutter>
        <BottomTabs>
          {BOTTOM.map((t, i) => <BottomTab key={t} $active={i === 0}>{t}</BottomTab>)}
          <ExpandButton>
            <svg width="20" height="20" viewBox="0 0 20 20" fill="none" stroke="#a8a8a8">
              <path d="M.5 10V.5H19.500V10" strokeDasharray="2 1" />
              <path d="M.5 11.500H19.500V19.500H.5Z" />
              <path d="M10 10V5" strokeWidth="2" />
              <path d="M6 6L10 2L14 6Z" fill="#a8a8a8" stroke="none" />
            </svg>
          </ExpandButton>
        </BottomTabs>
      </Main>
      <Gutter><Grip><GripMark /></Grip></Gutter>

      <Quote>
        <QuoteTop>
          <QuoteName>
            <SideTriangle />
            <Code>BK0451</Code>
            <StockName>房地产开发</StockName>
            <SideTriangle flip />
          </QuoteName>
          <QuotePrice>
            <Last>15183.15</Last>
            <Change>+207.04<br />+1.38%</Change>
            <AddButton>
              <svg width="21" height="21" viewBox="0 0 21 21" stroke="#909090" strokeWidth="2"><path d="M4 10.500H17M10.500 4V17" /></svg>
            </AddButton>
          </QuotePrice>
        </QuoteTop>
        <QuoteTabs>
          {["盘口", "资金", "指数", "异动", "板块"].map((t, i) => <QuoteTab key={t} $active={i === 0}>{t}</QuoteTab>)}
        </QuoteTabs>
        <InfoWrap>
          <InfoTable>
            <colgroup>
              <col width="55" /><col width="73" /><col width="9" /><col width="54" /><col width="65" />
            </colgroup>
            <tbody>
              {INFO.map(([a, av, ac, b, bv, bc]) => (
                <tr key={a}>
                  <InfoLabel>{a}</InfoLabel>
                  <InfoValue $color={ac}><Figure text={av} /></InfoValue>
                  <td />
                  <InfoLabel>{b}</InfoLabel>
                  <InfoValue $color={bc}><Figure text={bv} /></InfoValue>
                </tr>
              ))}
            </tbody>
          </InfoTable>
        </InfoWrap>
        <TickWrap>
          <TickTable>
            <tbody>
              {TICKS.map(([t, price, vol, up], i) => (
                <TickRow key={i} $rule={[3, 13, 14].includes(i)}>
                  <TickTime $major={t.length === 5}>{t}</TickTime>
                  <TickPrice>{price}</TickPrice>
                  <TickVolume $up={up}>{vol}</TickVolume>
                </TickRow>
              ))}
            </tbody>
          </TickTable>
          <Meter />
        </TickWrap>
        <QuoteTabs $h={27}>
          <QuoteTab $w={60} $active>分笔</QuoteTab>
          <QuoteTab $w={60}>分时</QuoteTab>
          <QuoteTab $w={60}>分价</QuoteTab>
        </QuoteTabs>
      </Quote>
    </Frame>
  );
}
